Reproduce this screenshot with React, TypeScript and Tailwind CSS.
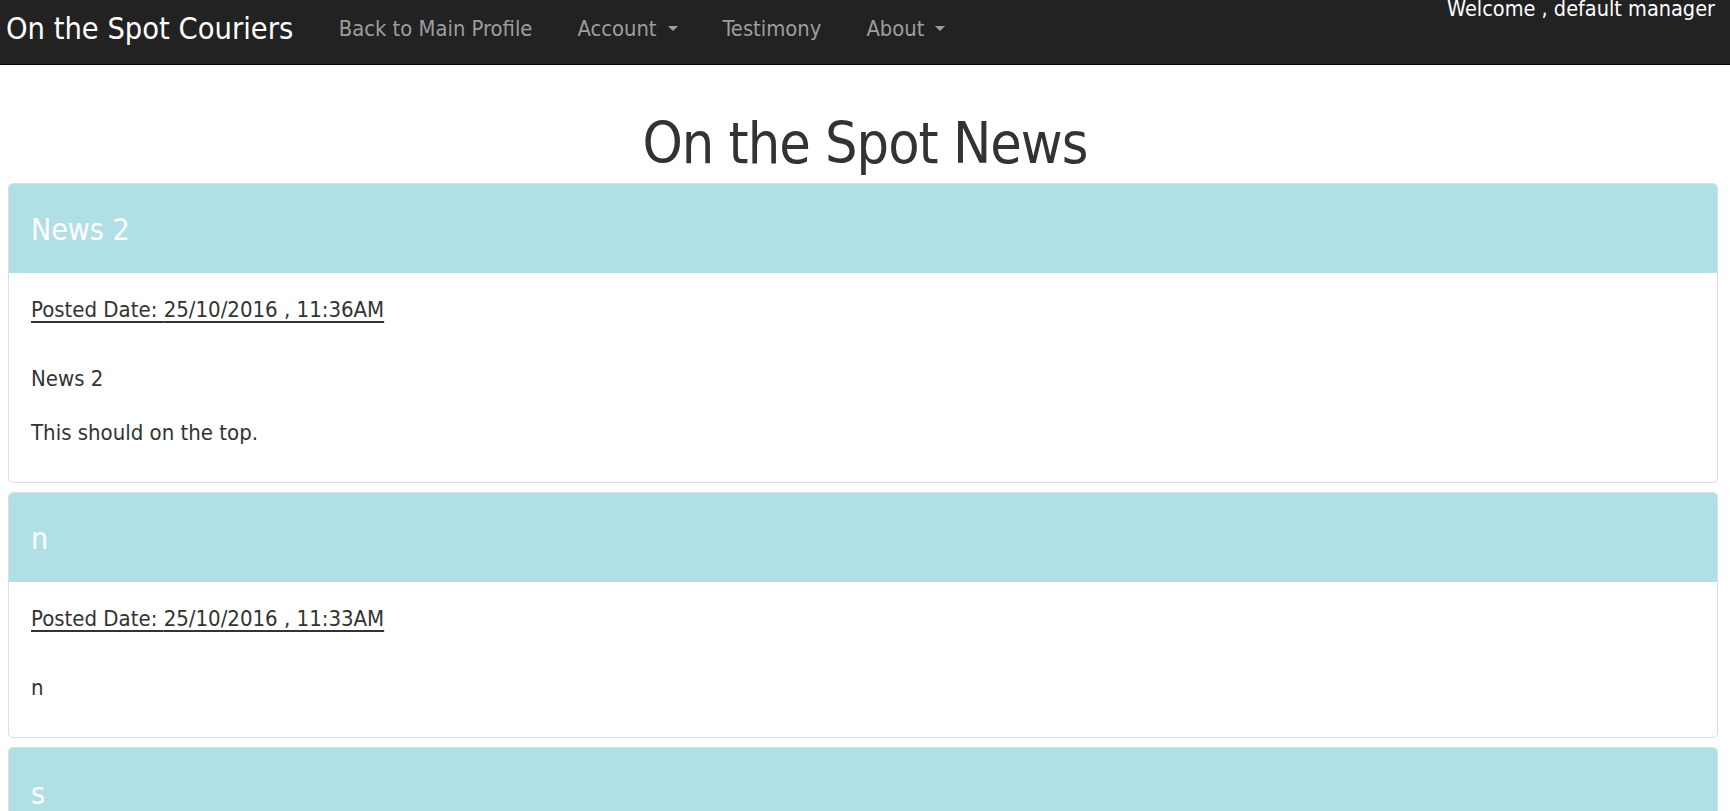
import React from 'react'

type NewsItem = {
  title: string
  posted: string
  lines: string[]
}

const news: NewsItem[] = [
  {
    title: 'News 2',
    posted: '25/10/2016 , 11:36AM',
    lines: ['News 2', 'This should on the top.'],
  },
  {
    title: 'n',
    posted: '25/10/2016 , 11:33AM',
    lines: ['n'],
  },
  {
    title: 's',
    posted: '25/10/2016 , 11:30AM',
    lines: ['s'],
  },
]

const font = { fontFamily: '"DejaVu Sans Condensed", "DejaVu Sans", Verdana, sans-serif' }

const Caret = () => (
  <span className="ml-[11px] inline-block h-0 w-0 border-x-[5px] border-t-[5px] border-x-transparent border-t-[#9d9d9d]" />
)

const NavBar = () => (
  <nav className="flex h-[65px] items-center border-b border-[#080808] bg-[#222222] pb-[6px] pl-[6px] pr-[15px]">
    <a className="pr-[23px] text-[30.5px] leading-none text-white">On the Spot Couriers</a>
    <ul className="flex items-center">
      <li className="px-[22.5px] text-[21.8px] leading-none text-[#9d9d9d]">Back to Main Profile</li>
      <li className="flex items-center px-[22.5px] text-[21.8px] leading-none text-[#9d9d9d]">
        Account
        <Caret />
      </li>
      <li className="px-[22.5px] text-[21.8px] leading-none text-[#9d9d9d]">Testimony</li>
      <li className="flex items-center px-[22.5px] text-[21.8px] leading-none text-[#9d9d9d]">
        About
        <Caret />
      </li>
    </ul>
    <div className="-mt-[7px] ml-auto self-start text-[21.5px] leading-normal text-white">
      Welcome , default manager
    </div>
  </nav>
)

const NewsPanel = ({ item }: { item: NewsItem }) => (
  <div className="mb-[9px] overflow-hidden rounded-[5px] border border-[#dddddd] bg-white">
    <div className="flex h-[89px] items-center bg-[#b0e0e6] px-[22px] pt-[3px] text-[30px] leading-none text-white">
      {item.title}
    </div>
    <div className="px-[22px] pb-[35px] pt-[23px] text-[22px] leading-[28px] text-[#333333]">
      <p className="underline underline-offset-[4px]">Posted Date: {item.posted}</p>
      <p className="mt-[41px]">{item.lines[0]}</p>
      {item.lines.slice(1).map((line) => (
        <p key={line} className="mt-[26px]">
          {line}
        </p>
      ))}
    </div>
  </div>
)

export default function App() {
  return (
    <div className="min-h-screen bg-white" style={font}>
      <NavBar />
      <h1 className="pb-[7px] pt-[46px] text-center text-[57px] leading-[65px] tracking-[-1px] text-[#333333]">
        On the Spot News
      </h1>
      <section className="pl-[8px] pr-[12px]">
        {news.map((item) => (
          <NewsPanel key={item.title} item={item} />
        ))}
      </section>
    </div>
  )
}
